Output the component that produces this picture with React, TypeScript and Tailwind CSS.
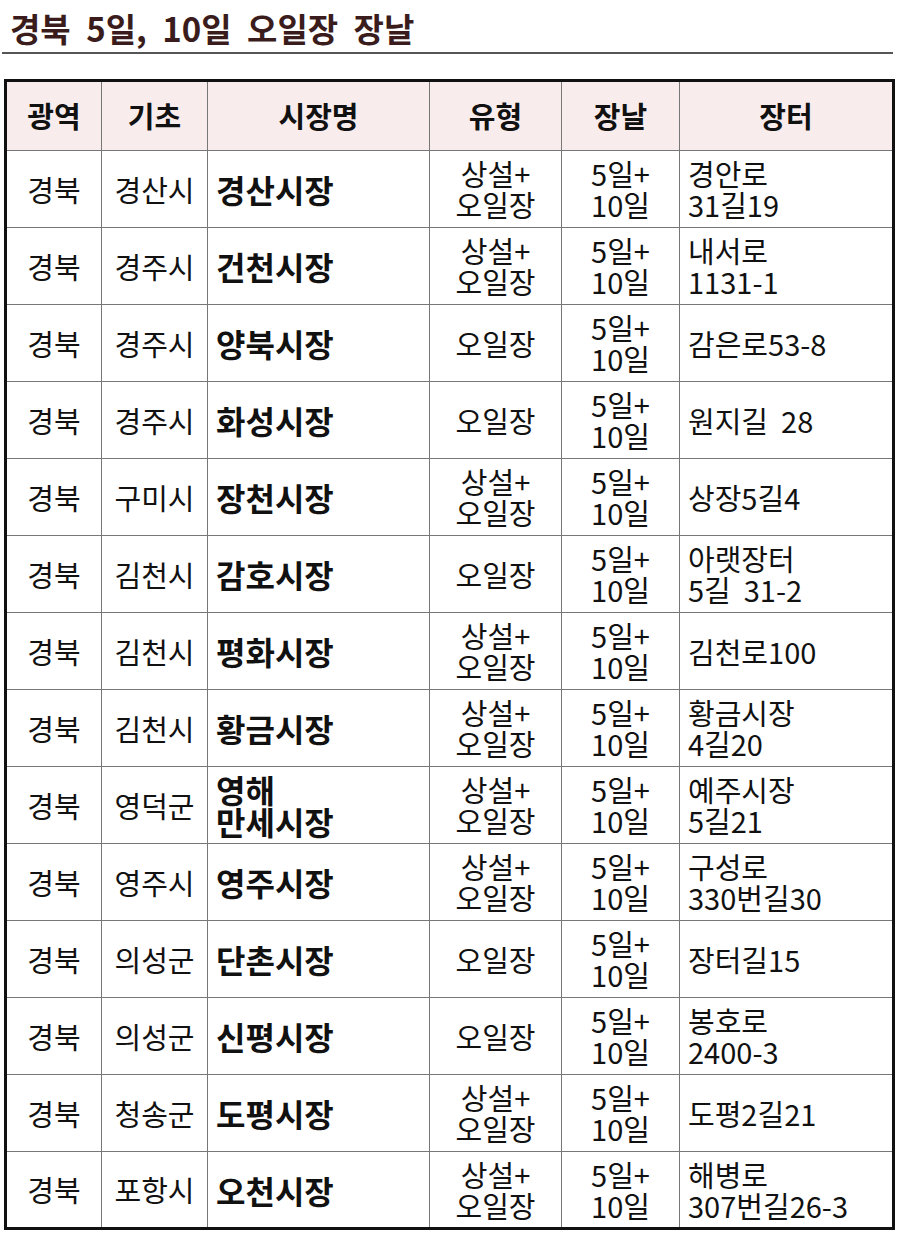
const rows: [string, string, string, string, string, string][] = [
  ['경북', '경산시', '경산시장', '상설+\n오일장', '5일+\n10일', '경안로\n31길19'],
  ['경북', '경주시', '건천시장', '상설+\n오일장', '5일+\n10일', '내서로\n1131-1'],
  ['경북', '경주시', '양북시장', '오일장', '5일+\n10일', '감은로53-8'],
  ['경북', '경주시', '화성시장', '오일장', '5일+\n10일', '원지길  28'],
  ['경북', '구미시', '장천시장', '상설+\n오일장', '5일+\n10일', '상장5길4'],
  ['경북', '김천시', '감호시장', '오일장', '5일+\n10일', '아랫장터\n5길  31-2'],
  ['경북', '김천시', '평화시장', '상설+\n오일장', '5일+\n10일', '김천로100'],
  ['경북', '김천시', '황금시장', '상설+\n오일장', '5일+\n10일', '황금시장\n4길20'],
  ['경북', '영덕군', '영해\n만세시장', '상설+\n오일장', '5일+\n10일', '예주시장\n5길21'],
  ['경북', '영주시', '영주시장', '상설+\n오일장', '5일+\n10일', '구성로\n330번길30'],
  ['경북', '의성군', '단촌시장', '오일장', '5일+\n10일', '장터길15'],
  ['경북', '의성군', '신평시장', '오일장', '5일+\n10일', '봉호로\n2400-3'],
  ['경북', '청송군', '도평시장', '상설+\n오일장', '5일+\n10일', '도평2길21'],
  ['경북', '포항시', '오천시장', '상설+\n오일장', '5일+\n10일', '해병로\n307번길26-3'],
];

const headers = ['광역', '기초', '시장명', '유형', '장날', '장터'];

export default function App() {
  return (
    <div
      className="w-[900px] bg-white text-[#111]"
      style={{ fontFamily: '"Noto Sans CJK KR", "Noto Sans", sans-serif' }}
    >
      {/* TITLE */}
      <div className="px-[2px] pt-[8px]">
        <h1 className="pl-[8px] text-[33px] font-bold leading-[40px] text-[#3b1c1c] [word-spacing:8px]">
          경북 5일, 10일 오일장 장날
        </h1>
        <div className="mt-[4px] h-[2px] w-[891px] bg-[#555]" />
      </div>

      {/* TABLE */}
      <table className="ml-[4px] mt-[25px] w-[888px] table-fixed border-collapse border-[3px] border-[#111]">
        <colgroup>
          <col className="w-[96px]" />
          <col className="w-[106px]" />
          <col className="w-[222px]" />
          <col className="w-[132px]" />
          <col className="w-[118px]" />
          <col className="w-[214px]" />
        </colgroup>
        <thead>
          <tr className="h-[70px] bg-[#f9ecec]">
            {headers.map((h) => (
              <th
                key={h}
                className="border-[1.5px] border-[#777] text-center text-[29px] font-bold"
              >
                {h}
              </th>
            ))}
          </tr>
        </thead>
        <tbody>
          {rows.map((r, i) => (
            <tr key={i} className="h-[77px]">
              <td className="border-[1.5px] border-[#777] text-center text-[29px] leading-[31px]">
                {r[0]}
              </td>
              <td className="border-[1.5px] border-[#777] text-center text-[29px] leading-[31px]">
                {r[1]}
              </td>
              <td className="whitespace-pre-line border-[1.5px] border-[#777] pl-[8px] text-left text-[32px] font-bold leading-[32px]">
                {r[2]}
              </td>
              <td className="whitespace-pre-line border-[1.5px] border-[#777] text-center text-[29px] leading-[31px]">
                {r[3]}
              </td>
              <td className="whitespace-pre-line border-[1.5px] border-[#777] text-center text-[29px] leading-[31px]">
                {r[4]}
              </td>
              <td className="whitespace-pre border-[1.5px] border-[#777] pl-[8px] text-left text-[29px] leading-[31px]">
                {r[5]}
              </td>
            </tr>
          ))}
        </tbody>
      </table>
    </div>
  );
}
